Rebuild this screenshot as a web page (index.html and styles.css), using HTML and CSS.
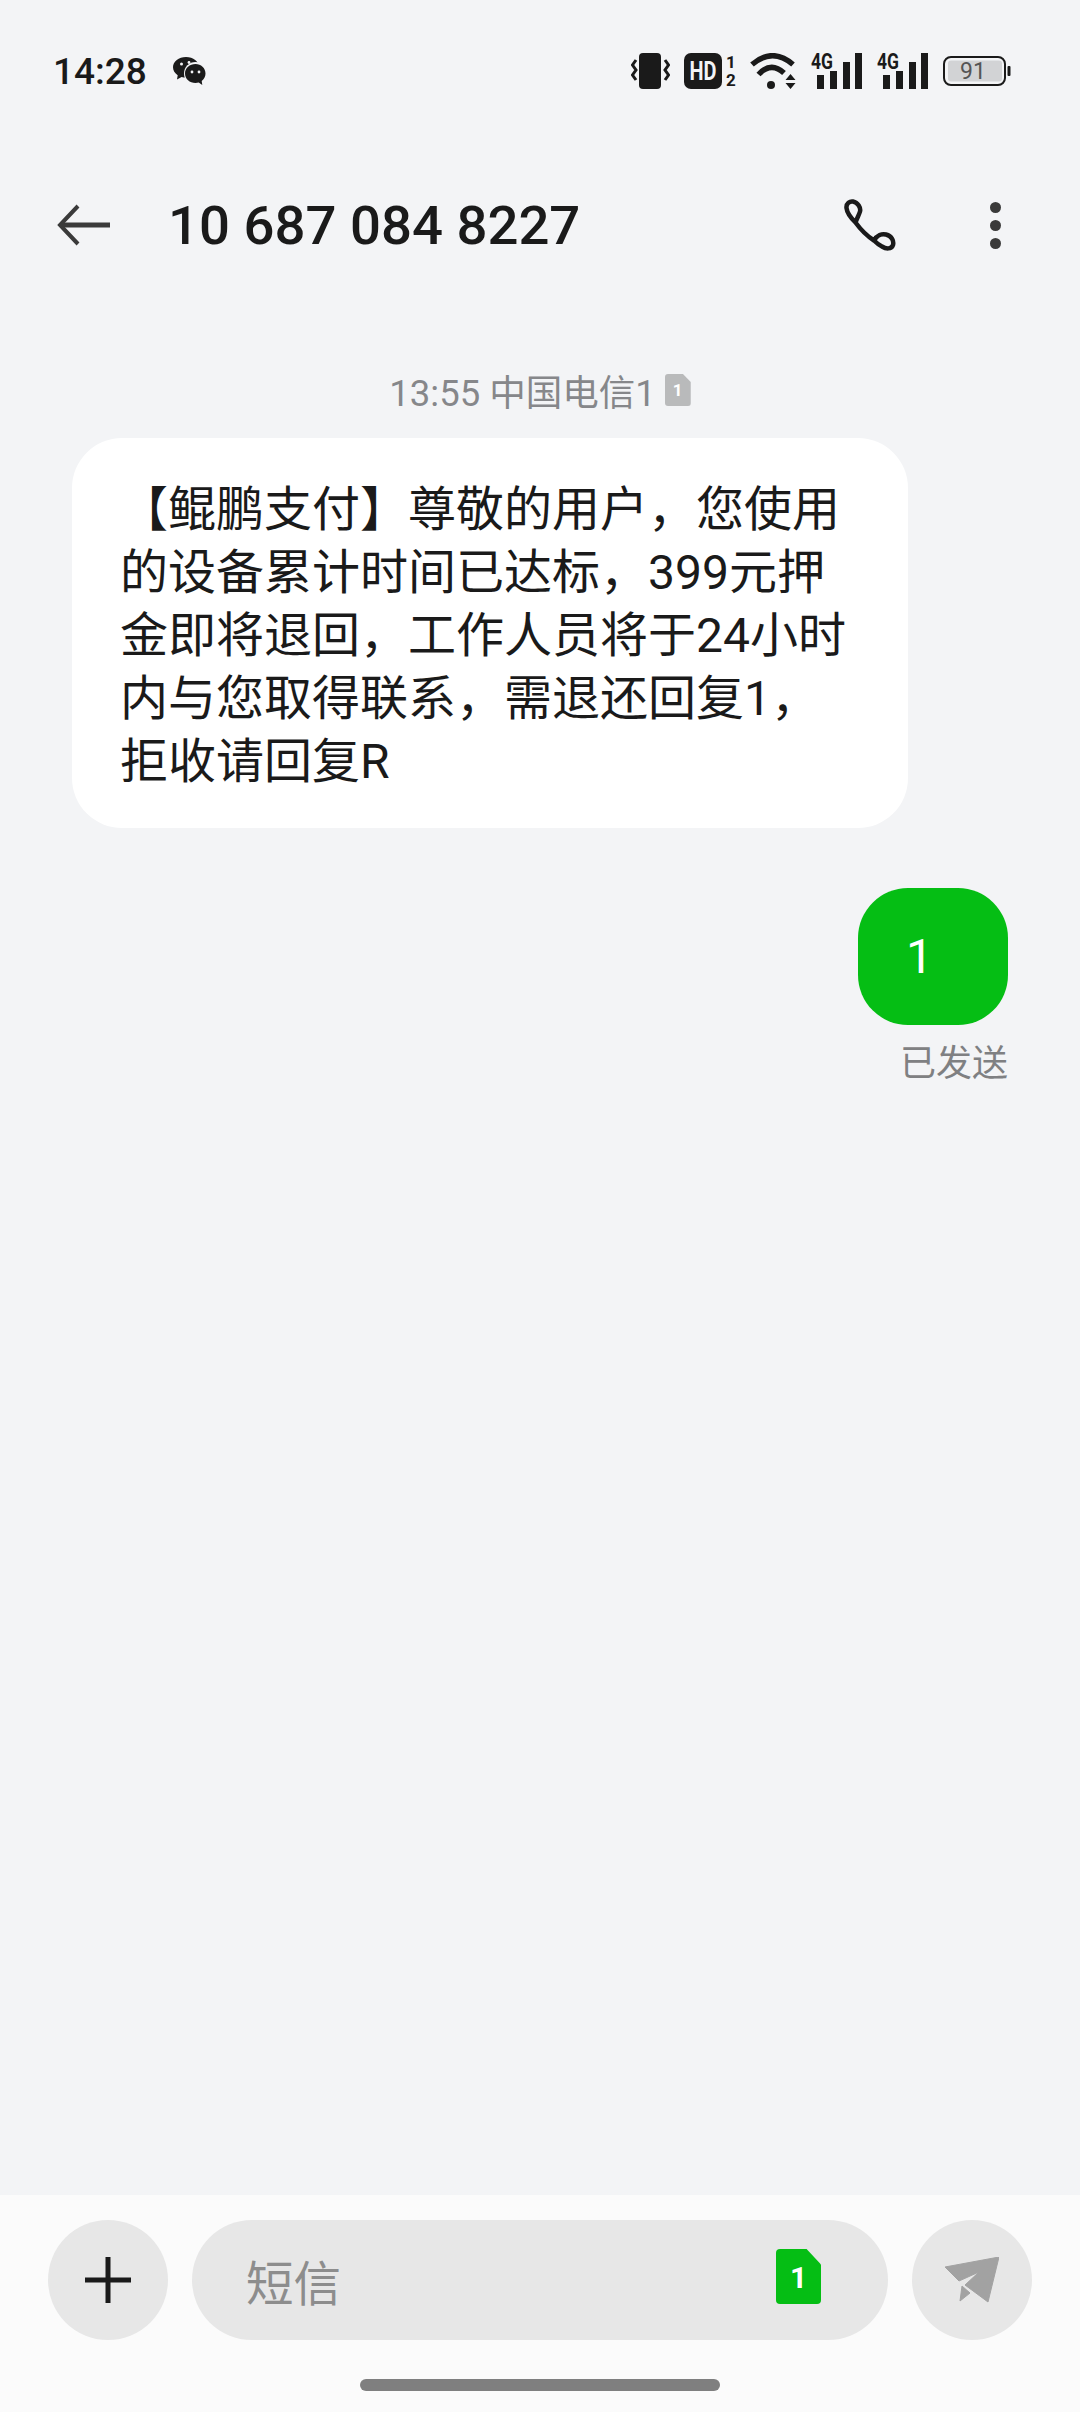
FILE: index.html
```html
<!DOCTYPE html>
<html lang="zh">
<head>
<meta charset="UTF-8" />
<title>短信</title>
<link rel="stylesheet" href="styles.css">
</head>
<body>
<div class="screen">
  <div class="status-bar">
    <div class="status-left">
      <span class="clock">14:28</span>
      <svg class="ic-wechat" width="36" height="30" viewBox="0 0 36 30">
        <path d="M14 1C6.800 1 1 5.600 1 11.300c0 3.200 1.800 6 4.700 7.900L5 23.500l4.600-2.500c1.400.4 2.900.6 4.400.6 7.200 0 13-4.600 13-10.300S21.200 1 14 1z" fill="#1a1a1a"/>
        <circle cx="23.500" cy="17.500" r="11.500" fill="#f3f4f6"/>
        <path d="M23.500 8c-5.800 0-10.500 4-10.500 9.500s4.700 9.500 10.500 9.500c1.100 0 2.200-.1 3.200-.4l3.600 2.400-.6-3.900c2.300-1.700 3.800-4.600 3.800-7.600C33.500 12 29 8 23.500 8z" fill="#1a1a1a"/>
        <circle cx="9.500" cy="8" r="1.500" fill="#f3f4f6"/>
        <circle cx="17" cy="6.500" r="1.400" fill="#f3f4f6"/>
        <circle cx="20" cy="16" r="1.400" fill="#f3f4f6"/>
        <circle cx="27" cy="16" r="1.400" fill="#f3f4f6"/>
      </svg>
    </div>
    <div class="status-right">
      <svg width="39" height="36" viewBox="0 0 39 36">
        <rect x="8" y="0" width="22" height="36" rx="4" fill="#1a1a1a"/>
        <path d="M5 7 1.500 12 5 17 1.500 22 5 27" fill="none" stroke="#1a1a1a" stroke-width="3"/>
        <path d="M34 7 37.500 12 34 17 37.500 22 34 27" fill="none" stroke="#1a1a1a" stroke-width="3"/>
      </svg>
      <div class="hd-group">
        <svg width="38" height="36" viewBox="0 0 38 36">
          <rect x="0" y="0" width="38" height="36" rx="7" fill="#1a1a1a"/>
          <text x="5.500" y="26.500" class="t-hd" textLength="27" lengthAdjust="spacingAndGlyphs">HD</text>
        </svg>
        <div class="sim-nums"><span>1</span><span>2</span></div>
      </div>
      <svg width="47" height="36" viewBox="0 0 47 36">
        <path d="M2 11.500Q22.500-6 43 11.500" fill="none" stroke="#1a1a1a" stroke-width="5.500"/>
        <path d="M8.500 21.500Q21 8 34 20" fill="none" stroke="#1a1a1a" stroke-width="5.500"/>
        <circle cx="21" cy="32" r="4" fill="#1a1a1a"/>
        <path d="M40.500 21 45.500 27H35.500zM35.500 30H45.500L40.500 36z" fill="#1a1a1a"/>
      </svg>
      <svg class="ic-signal" width="52" height="44" viewBox="0 -8 52 44">
        <text x="0" y="16" class="t-4g" textLength="22" lengthAdjust="spacingAndGlyphs">4G</text>
        <rect x="6" y="22" width="7" height="14" fill="#1a1a1a"/>
        <rect x="19" y="18" width="7" height="18" fill="#1a1a1a"/>
        <rect x="32" y="9" width="7" height="27" fill="#1a1a1a"/>
        <rect x="44" y="0" width="7" height="36" fill="#1a1a1a"/>
      </svg>
      <svg class="ic-signal" width="52" height="44" viewBox="0 -8 52 44">
        <text x="0" y="16" class="t-4g" textLength="22" lengthAdjust="spacingAndGlyphs">4G</text>
        <rect x="6" y="22" width="7" height="14" fill="#1a1a1a"/>
        <rect x="19" y="18" width="7" height="18" fill="#1a1a1a"/>
        <rect x="32" y="9" width="7" height="27" fill="#1a1a1a"/>
        <rect x="44" y="0" width="7" height="36" fill="#1a1a1a"/>
      </svg>
      <svg class="ic-batt" width="68" height="30" viewBox="0 0 68 30">
        <rect x="1" y="1" width="61" height="28" rx="7" fill="none" stroke="#1a1a1a" stroke-width="2"/>
        <rect x="5" y="4.500" width="54" height="21" rx="3" fill="#d2d3d5"/>
        <rect x="64.500" y="10" width="3" height="10" rx="1" fill="#1a1a1a"/>
        <text x="30" y="23" class="t-batt" text-anchor="middle">91</text>
      </svg>
    </div>
  </div>

  <div class="top-bar">
    <svg class="ic-back" width="54" height="42" viewBox="0 0 54 42">
      <path d="M21 2 3 21l18 19" fill="none" stroke="#3a3a3a" stroke-width="4"/>
      <path d="M4 21h49" stroke="#3a3a3a" stroke-width="5"/>
    </svg>
    <h1 class="number">10 687 084 8227</h1>
    <svg class="ic-phone" width="52" height="52" viewBox="0 0 52 52">
      <path d="M11.500 23.500C7 19 3 14 2.500 9 2 4 6 2 9 2.500 14 3.500 17 9 16 12.500 15 16 13 19 11.500 23.500 17 31 23 37 30 41.500 33 36 38 34.500 42 35.500 48 37 50 42 49 46 47.500 50.500 42 50 38 47.500 35 46 32 43.500 30 41.500" fill="none" stroke="#1a1a1a" stroke-width="4.500" stroke-linejoin="round" stroke-linecap="round"/>
    </svg>
    <div class="more">
      <span></span><span></span><span></span>
    </div>
  </div>

  <div class="thread">
    <div class="stamp">
      <span>13:55 中国电信1</span>
      <span class="sim-mini">1</span>
    </div>
    <div class="bubble-in">【鲲鹏支付】尊敬的用户，您使用的设备累计时间已达标，399元押金即将退回，工作人员将于24小时内与您取得联系，需退还回复1，拒收请回复R</div>
    <div class="bubble-out">1</div>
    <div class="sent">已发送</div>
  </div>

  <div class="composer">
    <div class="composer-row">
      <div class="round-btn">
        <svg width="46" height="46" viewBox="0 0 46 46">
          <path d="M23 0v46M0 23h46" stroke="#1a1a1a" stroke-width="5"/>
        </svg>
      </div>
      <div class="input">
        <span class="placeholder">短信</span>
        <span class="sim-green">1</span>
      </div>
      <div class="round-btn">
        <svg width="54" height="46" viewBox="0 0 54 46">
          <path d="M0 10 54 0 43 45 20 28 34 15 14 24z" fill="#a2a2a2" stroke="#a2a2a2" stroke-width="1" stroke-linejoin="round"/>
          <path d="M17 29 25 36 15 44z" fill="#a2a2a2" stroke="#a2a2a2" stroke-width="1" stroke-linejoin="round"/>
        </svg>
      </div>
    </div>
    <div class="home-bar"></div>
  </div>
</div>
</body>
</html>
```

FILE: styles.css
```css
* { box-sizing: border-box; margin: 0; padding: 0; }
body { font-family: Roboto, "Noto Sans CJK SC", sans-serif; background: #f3f4f6; color: #1a1a1a; }
.screen { width: 1080px; height: 2412px; display: flex; flex-direction: column; overflow: hidden; }

.status-bar { height: 110px; padding: 32px 69px 0 53px; display: flex; align-items: center; justify-content: space-between; }
.status-left { display: flex; align-items: center; gap: 25px; }
.clock { font-size: 37px; font-weight: 500; }
.status-right { display: flex; align-items: center; gap: 14px; }
.status-right svg { display: block; }
.status-right .ic-signal { margin-top: -8px; }
.hd-group { display: flex; gap: 4px; }
.sim-nums { width: 10px; height: 36px; display: flex; flex-direction: column; justify-content: space-between; font-size: 17px; font-weight: 700; line-height: 18px; text-align: center; }
.t-hd { font: 700 25px Roboto, sans-serif; fill: #f3f4f6; }
.t-4g { font: 700 22px Roboto, sans-serif; fill: #1a1a1a; }
.t-batt { font: 400 23px Roboto, sans-serif; fill: #555; }

.top-bar { height: 230px; padding: 0 79px 0 57px; display: flex; align-items: center; }
.ic-back { flex-shrink: 0; }
.number { font-size: 54.500px; font-weight: 500; margin-left: 57px; flex: 1; }
.ic-phone { margin-right: 94px; }
.more { display: flex; flex-direction: column; gap: 7px; }
.more span { width: 11px; height: 11px; border-radius: 50%; background: #3a3a3a; }

.thread { flex: 1; display: flex; flex-direction: column; padding: 25px 72px 0; }
.stamp { height: 50px; display: flex; align-items: center; justify-content: center; gap: 9px; font-size: 36.500px; color: #86878a; }
.sim-mini { width: 26px; height: 32px; background: #b9babb; color: #fff; border-radius: 3px; clip-path: polygon(0 0, 70% 0, 100% 25%, 100% 100%, 0 100%); font-size: 17px; font-weight: 700; text-align: center; line-height: 32px; }
.bubble-in { width: 836px; margin-top: 23px; padding: 40px 48px 35px 48px; background: #fff; border-radius: 50px; font-size: 48px; line-height: 63px; }
.bubble-out { align-self: flex-end; width: 150px; height: 137px; margin-top: 60px; padding-left: 48px; background: #05be14; border-radius: 50px; color: #fff; font-size: 48px; line-height: 137px; }
.sent { align-self: flex-end; margin-top: 14px; font-size: 36px; line-height: 50px; color: #7f8082; }

.composer { height: 217px; background: #fbfbfb; padding: 25px 48px 0; flex-shrink: 0; }
.composer-row { display: flex; gap: 24px; height: 120px; }
.round-btn { width: 120px; height: 120px; border-radius: 50%; background: #e7e7e7; display: flex; align-items: center; justify-content: center; flex-shrink: 0; }
.input { flex: 1; border-radius: 60px; background: #e7e7e7; display: flex; align-items: center; justify-content: space-between; padding: 0 67px 0 54px; }
.placeholder { font-size: 47.500px; color: #8d8d8d; }
.sim-green { width: 45px; height: 55px; margin-bottom: 7px; background: #05be14; color: #fff; border-radius: 4px; clip-path: polygon(0 0, 68% 0, 100% 28%, 100% 100%, 0 100%); font-size: 30px; font-weight: 700; text-align: center; line-height: 57px; }
.home-bar { width: 360px; height: 12px; border-radius: 6px; background: #7f7f7f; margin: 39px auto 0; }
```
